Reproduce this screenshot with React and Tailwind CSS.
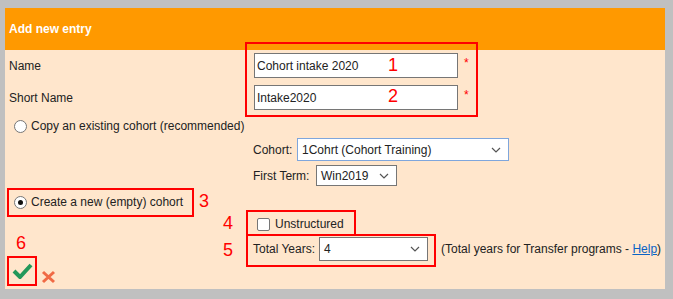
import React from 'react';

function Chevron() {
  return (
    <svg width="10" height="6" viewBox="0 0 10 6" className="shrink-0">
      <path d="M1 1 L5 5 L9 1" fill="none" stroke="#555" strokeWidth="1.2" />
    </svg>
  );
}

function Select({ value, className, focused }) {
  return (
    <div
      className={
        'flex items-center justify-between bg-white pl-[4px] pr-[7px] ' +
        (focused ? 'border border-[#7fa6dc] ' : 'border border-[#767676] ') +
        className
      }
    >
      <span>{value}</span>
      <Chevron />
    </div>
  );
}

function Radio({ checked }) {
  return (
    <span className="w-[13px] h-[13px] rounded-full border border-[#767676] bg-white flex items-center justify-center shrink-0">
      {checked && <span className="w-[5px] h-[5px] rounded-full bg-[#111]" />}
    </span>
  );
}

export default function App() {
  return (
    <div
      className="relative w-[673px] h-[299px] bg-[#c0c0c0] pt-[8px] pl-[5px] text-[12px] text-[#222] whitespace-nowrap overflow-hidden"
      style={{ fontFamily: '"Liberation Sans", Arial, sans-serif' }}
    >
      <div className="w-[660px] h-[281px] bg-[#ffe6cc] flex flex-col">
        {/* header */}
        <div className="h-[42px] bg-[#ff9900] flex items-center pl-[4px]">
          <span className="text-white font-bold">Add new entry</span>
        </div>

        <div className="flex flex-col pt-[3px]">
          <div className="flex items-center h-[25px] pl-[4px]">
            <span className="w-[245px]">Name</span>
            <div className="w-[204px] h-[25px] bg-white border border-[#767676] flex items-center pl-[2px]">
              Cohort intake 2020
            </div>
            <span className="self-start text-[#ff0000] ml-[6px] mt-[1px]">*</span>
          </div>

          <div className="flex items-center h-[25px] pl-[4px] mt-[7px]">
            <span className="w-[245px]">Short Name</span>
            <div className="w-[204px] h-[25px] bg-white border border-[#767676] flex items-center pl-[2px]">
              Intake2020
            </div>
            <span className="self-start text-[#ff0000] ml-[6px] mt-[1px]">*</span>
          </div>

          <div className="flex items-center h-[20px] pl-[9px] mt-[6px] gap-[4px]">
            <Radio />
            <span>Copy an existing cohort (recommended)</span>
          </div>

          <div className="flex items-center h-[23px] pl-[248px] mt-[2px]">
            <span className="w-[44px]">Cohort:</span>
            <Select value="1Cohrt (Cohort Training)" className="w-[212px] h-[23px]" focused />
          </div>

          <div className="flex items-center h-[21px] pl-[248px] mt-[4px]">
            <span className="w-[63px]">First Term:</span>
            <Select value="Win2019" className="w-[81px] h-[21px]" />
          </div>

          <div className="flex items-center h-[20px] pl-[9px] mt-[6px] gap-[4px]">
            <Radio checked />
            <span>Create a new (empty) cohort</span>
          </div>

          <div className="flex items-center h-[20px] pl-[252px] mt-[2px] gap-[5px]">
            <span className="w-[13px] h-[13px] border border-[#767676] rounded-[2px] bg-white shrink-0" />
            <span>Unstructured</span>
          </div>

          <div className="flex items-center h-[24px] pl-[248px] mt-[3px]">
            <span className="w-[66px]">Total Years:</span>
            <Select value="4" className="w-[109px] h-[24px]" />
            <span className="ml-[13px]">
              (Total years for Transfer programs - <span className="text-[#0b63c5] underline">Help</span>)
            </span>
          </div>

          <div className="flex items-end h-[24px] pl-[7px] mt-[1px] gap-[8px]">
            <svg width="21" height="16" viewBox="0 0 21 16" className="mb-[7px]">
              <path d="M2 8 L8 14 L19 2" fill="none" stroke="#23985a" strokeWidth="4" />
            </svg>
            <svg width="15" height="14" viewBox="0 0 15 14" className="mb-[2px]">
              <path d="M2 2 L13 12 M13 2 L2 12" fill="none" stroke="#f06a45" strokeWidth="3" />
            </svg>
          </div>
        </div>
      </div>

      {/* annotation overlays */}
      <div className="absolute left-[245px] top-[42px] w-[233px] h-[75px] border-2 border-[#ff0000]" />
      <span className="absolute left-[388px] top-[55px] text-[18px] leading-[20px] text-[#ff0000]">1</span>
      <span className="absolute left-[388px] top-[86px] text-[18px] leading-[20px] text-[#ff0000]">2</span>

      <div className="absolute left-[7px] top-[188px] w-[187px] h-[29px] border-2 border-[#ff0000]" />
      <span className="absolute left-[199px] top-[191px] text-[18px] leading-[20px] text-[#ff0000]">3</span>

      <div className="absolute left-[246px] top-[210px] w-[110px] h-[26px] border-2 border-[#ff0000]" />
      <span className="absolute left-[223px] top-[213px] text-[18px] leading-[20px] text-[#ff0000]">4</span>

      <div className="absolute left-[246px] top-[234px] w-[190px] h-[33px] border-2 border-[#ff0000]" />
      <span className="absolute left-[223px] top-[240px] text-[18px] leading-[20px] text-[#ff0000]">5</span>

      <div className="absolute left-[7px] top-[256px] w-[30px] h-[30px] border-2 border-[#ff0000]" />
      <span className="absolute left-[16px] top-[233px] text-[18px] leading-[20px] text-[#ff0000]">6</span>
    </div>
  );
}
